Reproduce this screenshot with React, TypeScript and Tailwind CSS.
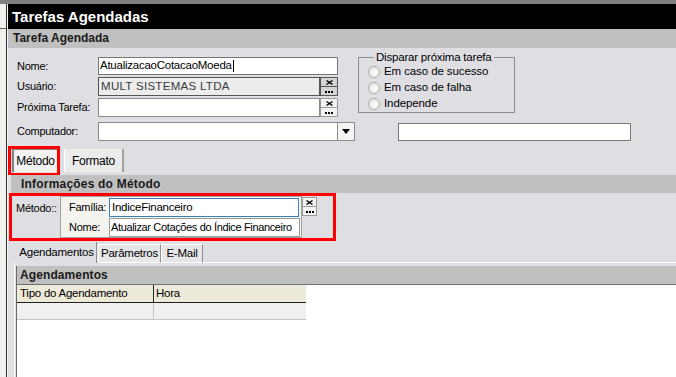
import React from "react";

function XBtn({ dark = false, w = 18, h = 19 }: { dark?: boolean; w?: number; h?: number }) {
  const half = Math.floor(h / 2);
  const cell = dark
    ? "bg-[#d4d4d4] border border-[#555]"
    : "bg-[#f4f4f4] border border-[#9a9a9a]";
  return (
    <div className="flex flex-col shrink-0" style={{ width: w, height: h }}>
      <div className={`flex items-center justify-center ${cell}`} style={{ height: half + 1 }}>
        <svg width="7" height="5" viewBox="0 0 7 5">
          <path d="M0.5 0.5 L6.5 4.5 M6.5 0.5 L0.5 4.5" stroke="#000" strokeWidth="1.3" />
        </svg>
      </div>
      <div className={`flex items-end justify-center pb-[2px] -mt-[1px] ${cell}`} style={{ height: h - half }}>
        <svg width="8" height="2" viewBox="0 0 8 2">
          <rect x="0" y="0" width="2" height="2" fill="#000" />
          <rect x="3" y="0" width="2" height="2" fill="#000" />
          <rect x="6" y="0" width="2" height="2" fill="#000" />
        </svg>
      </div>
    </div>
  );
}

function Radio({ label }: { label: string }) {
  return (
    <div className="flex items-center h-[16px]">
      <div className="w-[12px] h-[12px] rounded-full border border-[#a8a8a8] bg-[radial-gradient(circle_at_60%_60%,#ffffff,#dcdcdc)] shrink-0" />
      <span className="ml-[4px] text-[11.5px] tracking-[-0.1px]">{label}</span>
    </div>
  );
}

export default function App() {
  return (
    <div className="w-[676px] h-[377px] overflow-hidden bg-white flex flex-col font-['Liberation_Sans',Arial,sans-serif] text-[11px] tracking-[-0.25px] text-black">
      <div className="h-[4px] bg-[#808080] shrink-0" />
      <div className="flex flex-1 min-h-0">
        {/* left strip */}
        <div className="flex shrink-0">
          <div className="w-[6px] bg-[#f0f0ec] flex flex-col">
            <div className="h-[25px] border-b border-[#606060]" />
          </div>
          <div className="w-[1px] bg-[#303030]" />
          <div className="w-[1px] bg-[#f6f6f6]" />
        </div>

        {/* main */}
        <div className="flex-1 flex flex-col min-w-0">
          <div className="h-[25px] bg-black pl-[4px] text-white font-bold text-[15px] leading-[25px] tracking-[0px] shrink-0">
            Tarefas Agendadas
          </div>
          <div className="h-[19px] bg-[#c0c0c0] pl-[5px] font-bold text-[12px] leading-[19px] tracking-[0px] text-[#1a1a1a] shrink-0">
            Tarefa Agendada
          </div>

          <div className="bg-[#dfdfe3] shrink-0 flex flex-col">
            <div className="flex items-start">
              <div className="pl-[9px] pt-[9px] flex flex-col">
                <div className="flex items-center h-[18px]">
                  <span className="w-[81px]">Nome:</span>
                  <div className="w-[240px] h-[18px] bg-white border border-[#767676] flex items-center pl-[1px] text-[11.5px]">
                    AtualizacaoCotacaoMoeda<span className="w-[1px] h-[12px] bg-black ml-[1px]" />
                  </div>
                </div>
                <div className="flex items-center h-[19px] mt-[2px]">
                  <span className="w-[81px]">Usuário:</span>
                  <div className="w-[222px] h-[19px] bg-[#ececec] border border-[#555] flex items-center pl-[2px] text-[11.5px] tracking-[0.3px] text-[#3a3a3a]">
                    MULT SISTEMAS LTDA
                  </div>
                  <XBtn dark />
                </div>
                <div className="flex items-center h-[19px] mt-[2px]">
                  <span className="w-[81px]">Próxima Tarefa:</span>
                  <div className="w-[222px] h-[19px] bg-white border border-[#8a8a8a]" />
                  <XBtn />
                </div>
              </div>
              <fieldset className="ml-[20px] mt-[3px] w-[157px] h-[62px] border border-[#8c8c8c] pl-[9px] pt-[0px]">
                <legend className="ml-[6px] px-[2px] text-[11.5px] leading-[12px] tracking-[-0.2px]">Disparar próxima tarefa</legend>
                <div className="flex flex-col mt-[1px]">
                  <Radio label="Em caso de sucesso" />
                  <Radio label="Em caso de falha" />
                  <Radio label="Independe" />
                </div>
              </fieldset>
            </div>

            <div className="flex items-center h-[19px] mt-[5px] pl-[9px]">
              <span className="w-[81px]">Computador:</span>
              <div className="w-[257px] h-[19px] bg-white border border-[#8a8a8a] flex justify-end">
                <div className="w-[17px] h-full border-l border-[#8a8a8a] bg-[#f4f4f4] flex items-center justify-center">
                  <svg width="8" height="5" viewBox="0 0 8 5">
                    <path d="M0 0 H8 L4 5 Z" fill="#000" />
                  </svg>
                </div>
              </div>
              <div className="ml-[43px] w-[233px] h-[18px] bg-white border border-[#7a7a7a]" />
            </div>

            {/* tabs */}
            <div className="flex items-start h-[29px] mt-[5px]">
              <div className="w-[52px] h-[30px] border-[3px] border-[#ff0000] flex items-start pl-[1px]">
                <div className="w-[46px] h-[23px] bg-[#f2f2f2] border-l-2 border-t border-[#808080] flex items-center justify-center text-[12px]">
                  Método
                </div>
              </div>
              <div className="ml-[4px] mt-[3px] w-[60px] h-[23px] bg-[#ebebeb] border-l border-white border-r-2 border-r-[#a0a0a0] flex items-center justify-center text-[12px]">
                Formato
              </div>
            </div>
          </div>

          {/* method info */}
          <div className="bg-[#dfdfe3] flex flex-col shrink-0">
            <div className="ml-[3px] h-[18px] bg-[#c0c0c0] pl-[10px] font-bold text-[12px] leading-[18px] tracking-[0.2px] text-[#1a1a1a]">
              Informações do Método
            </div>
            <div className="ml-[1px] w-[327px] h-[48px] border-[3px] border-[#ff0000] flex items-start">
              <span className="w-[48px] pl-[4px] pt-[4px]">Método::</span>
              <div className="w-[242px] h-[42px] border border-[#a0a0a0] bg-[#f4f3ee] flex flex-col pt-[1px]">
                <div className="flex items-center h-[19px]">
                  <span className="w-[48px] pl-[8px]">Família:</span>
                  <div className="w-[190px] h-[19px] bg-white border border-[#3c7fb1] flex items-center pl-[2px] text-[11.5px]">
                    IndiceFinanceiro
                  </div>
                </div>
                <div className="flex items-center h-[19px] mt-[1px]">
                  <span className="w-[48px] pl-[8px]">Nome:</span>
                  <div className="w-[191px] h-[19px] bg-white border border-[#9a9a9a] flex items-center pl-[1px] text-[11px] tracking-[-0.35px] whitespace-nowrap">
                    Atualizar Cotações do Índice Financeiro
                  </div>
                </div>
              </div>
              <div className="mt-[1px]">
                <XBtn w={15} h={19} />
              </div>
            </div>

            {/* subtabs */}
            <div className="flex items-end h-[21px] mt-[1px] pl-[9px]">
              <div className="h-[21px] w-[80px] border-r border-[#909090] flex items-start justify-center pt-[2px] text-[11.5px]">
                Agendamentos
              </div>
              <div className="h-[19px] w-[63px] ml-[1px] bg-[#e6e6e8] border-t border-l border-white border-r border-r-[#909090] border-b border-b-white flex items-center justify-center text-[11.5px]">
                Parâmetros
              </div>
              <div className="h-[19px] w-[42px] bg-[#e6e6e8] border-t border-l border-white border-r border-r-[#909090] border-b border-b-white flex items-center justify-center text-[11.5px]">
                E-Mail
              </div>
              <div className="flex-1 h-[1px] bg-white" />
            </div>
          </div>

          {/* agendamentos page */}
          <div className="flex-1 min-h-0 flex bg-[#dfdfe3] pl-[6px]">
            <div className="w-[1px] bg-white" />
            <div className="w-[1px]" />
            <div className="flex-1 flex flex-col pt-[3px]">
              <div className="flex-1 flex flex-col border-l border-[#6a6a6a] bg-white">
                <div className="h-[19px] bg-[#c0c0c0] border-b border-[#707070] pl-[3px] font-bold text-[12px] leading-[18px] tracking-[0.1px] text-[#1a1a1a] shrink-0">
                  Agendamentos
                </div>
                <div className="flex w-[289px] h-[18px] bg-[#ece9d8] border-b border-[#202020] shrink-0">
                  <div className="w-[137px] border-r border-[#202020] pl-[3px] flex items-center text-[11.5px]">
                    Tipo do Agendamento
                  </div>
                  <div className="flex-1 pl-[2px] flex items-center text-[11.5px]">Hora</div>
                </div>
                <div className="flex w-[289px] h-[17px] bg-[#f0f0f0] border-b border-[#c4c4c4] shrink-0">
                  <div className="w-[137px] border-r border-[#c4c4c4]" />
                  <div className="flex-1" />
                </div>
              </div>
            </div>
          </div>
        </div>
      </div>
    </div>
  );
}
